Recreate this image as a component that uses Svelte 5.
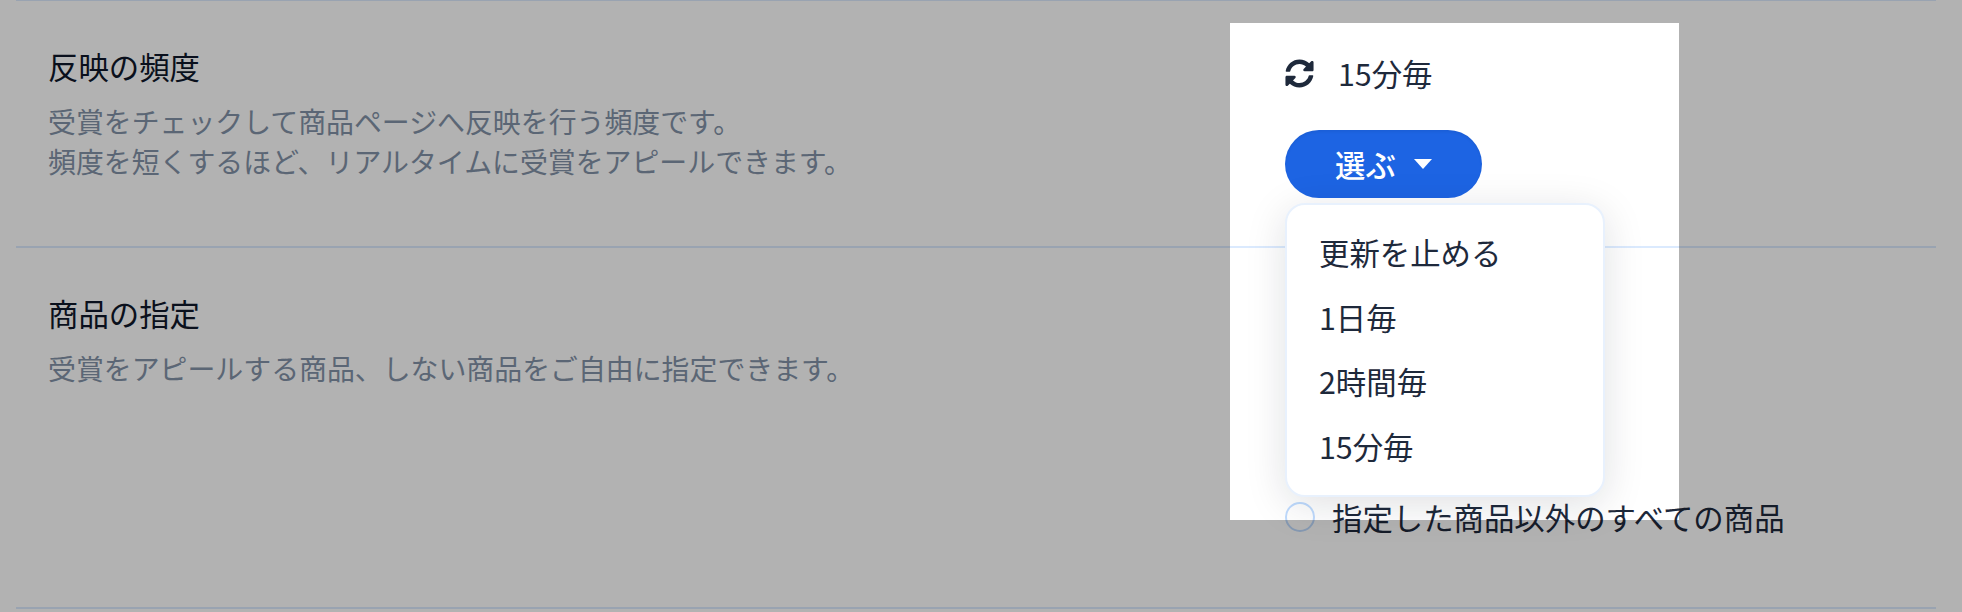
<script>
  const options = ['更新を止める', '1日毎', '2時間毎', '15分毎'];
</script>

<div class="page">
  <section class="row first">
    <div class="info">
      <h3>反映の頻度</h3>
      <p>受賞をチェックして商品ページへ反映を行う頻度です。<br />頻度を短くするほど、リアルタイムに受賞をアピールできます。</p>
    </div>
    <div class="control">
      <div class="current">
        <svg class="sync" viewBox="0 0 512 512" aria-hidden="true">
          <path d="M370.72 133.28C339.458 104.008 298.888 87.962 255.848 88c-77.458.068-144.328 53.178-162.791 126.85-1.344 5.363-6.122 9.15-11.651 9.15H24.103c-7.498 0-13.194-6.807-11.807-14.176C33.933 94.924 134.813 8 256 8c66.448 0 126.791 26.136 171.315 68.685L463.03 40.97C478.149 25.851 504 36.559 504 57.941V192c0 13.255-10.745 24-24 24H345.941c-21.382 0-32.09-25.851-16.971-40.971l41.75-41.749zM32 296h134.059c21.382 0 32.09 25.851 16.971 40.971l-41.75 41.75c31.262 29.273 71.835 45.319 114.876 45.28 77.418-.07 144.315-53.144 162.787-126.849 1.344-5.363 6.122-9.15 11.651-9.15h57.304c7.498 0 13.194 6.807 11.807 14.176C478.067 417.076 377.187 504 256 504c-66.448 0-126.791-26.136-171.315-68.685L48.97 471.03C33.851 486.149 8 475.441 8 454.059V320c0-13.255 10.745-24 24-24z" />
        </svg>
        <span>15分毎</span>
      </div>
      <button class="pick">
        選ぶ
        <span class="caret"></span>
      </button>
      <ul class="menu">
        {#each options as option}
          <li>{option}</li>
        {/each}
      </ul>
    </div>
  </section>

  <section class="row second">
    <div class="info">
      <h3>商品の指定</h3>
      <p>受賞をアピールする商品、しない商品をご自由に指定できます。</p>
    </div>
    <div class="control">
      <label class="radio">
        <span class="dot"></span>
        指定した商品以外のすべての商品
      </label>
    </div>
  </section>

  <!-- tour spotlight: the shadow dims everything around the hole -->
  <div class="spotlight"></div>
</div>

<style>
  :global(body) {
    margin: 0;
    background: #fff;
  }

  .page {
    position: relative;
    width: 1962px;
    height: 612px;
    overflow: hidden;
    padding: 0 26px 0 16px;
    box-sizing: border-box;
    font-family: "Noto Sans CJK JP", "Noto Sans", sans-serif;
    color: #1e293b;
  }

  .row {
    display: grid;
    grid-template-columns: 1269px 1fr;
    border-top: 2px solid #dbeafe;
    box-sizing: border-box;
  }

  .first {
    height: 247px;
    margin-top: -1px;
  }

  .second {
    height: 363px;
    border-bottom: 2px solid #dbeafe;
  }

  .info {
    padding: 43px 0 0 32px;
  }

  h3 {
    margin: 0;
    font-size: 30.4px;
    font-weight: 400;
    line-height: 44px;
    color: #0f172a;
  }

  p {
    margin: 13px 0 0;
    font-size: 27.9px;
    line-height: 40px;
    color: #8393a8;
  }

  .control {
    position: relative;
    font-size: 30.4px;
  }

  .current {
    display: flex;
    align-items: center;
    gap: 24px;
    height: 44px;
    margin-top: 50px;
  }

  .sync {
    width: 29px;
    height: 29px;
    fill: #1e293b;
  }

  .pick {
    display: flex;
    align-items: center;
    gap: 18px;
    height: 68px;
    margin-top: 35px;
    padding: 0 50px 0 50px;
    border: 0;
    border-radius: 34px;
    background: #1d64e3;
    box-shadow: inset 0 2px 3px rgba(0, 0, 0, 0.06);
    color: #fff;
    font: inherit;
    font-weight: 500;
  }

  .caret {
    width: 0;
    height: 0;
    border-left: 9px solid transparent;
    border-right: 9px solid transparent;
    border-top: 10px solid #fff;
  }

  .menu {
    position: absolute;
    top: 202px;
    left: 0;
    z-index: 2;
    width: 320px;
    margin: 0;
    padding: 15px 0 17px;
    box-sizing: border-box;
    list-style: none;
    background: #fff;
    border: 2px solid #e8f1fd;
    border-radius: 20px;
    box-shadow: 0 8px 40px rgba(15, 23, 42, 0.13);
  }

  .menu li {
    height: 64.6px;
    padding-left: 32px;
    line-height: 64.6px;
  }

  .radio {
    position: absolute;
    top: 247px;
    left: 0;
    display: flex;
    align-items: center;
    gap: 17px;
    white-space: nowrap;
  }

  .dot {
    width: 30px;
    height: 30px;
    box-sizing: border-box;
    border: 2.5px solid #bfdbfe;
    border-radius: 50%;
  }

  .spotlight {
    position: absolute;
    top: 23px;
    left: 1230px;
    width: 449px;
    height: 497px;
    z-index: 3;
    box-shadow: 0 0 0 3000px rgba(0, 0, 0, 0.3);
  }
</style>
